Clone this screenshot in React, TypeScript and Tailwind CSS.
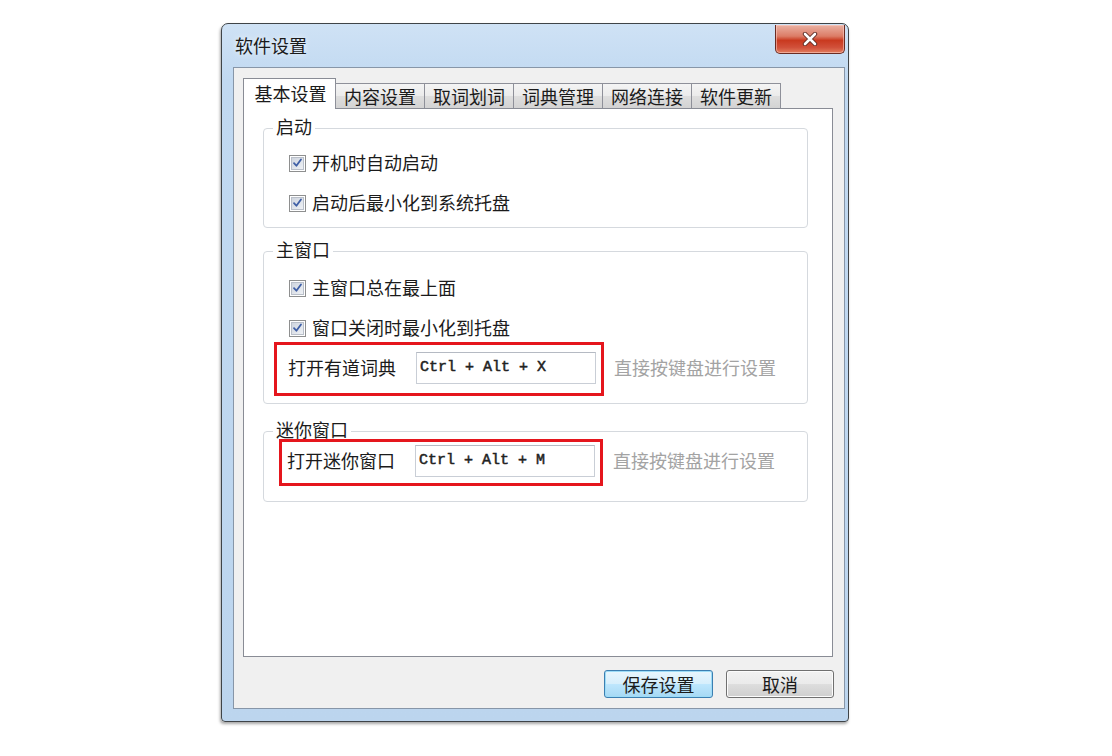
import React from "react";

const cjk = "font-['Noto_Sans_CJK_SC','Microsoft_YaHei',sans-serif]";

function Check() {
  return (
    <span className="flex h-[17px] w-[17px] shrink-0 items-center justify-center border border-[#8e8f8f] bg-white">
      <span className="flex h-[13px] w-[13px] items-center justify-center border border-[#b9bfc9] bg-[linear-gradient(135deg,#cfd5df_0%,#eef1f5_100%)]">
        <svg viewBox="0 0 12 12" className="h-[12px] w-[12px]">
          <path d="M2.2 6.2 L4.8 9 L9.8 2.2" stroke="#3f5fa6" strokeWidth="2" fill="none" strokeLinecap="round" strokeLinejoin="round" />
        </svg>
      </span>
    </span>
  );
}

function CheckRow({ label }: { label: string }) {
  return (
    <div className="flex h-[24px] items-center pl-[25px]">
      <Check />
      <span className="relative -top-px ml-[6px] text-[18px] leading-[24px] text-[#1b1b1b]">{label}</span>
    </div>
  );
}

function Legend({ label }: { label: string }) {
  return (
    <legend className="ml-[9px] px-[3px] text-[18px] leading-[20px]">
      <span className="relative -top-[2px]">{label}</span>
    </legend>
  );
}

function KeyInput({ value }: { value: string }) {
  return (
    <div className="flex h-[32px] w-[180px] items-center border border-[#c9ced6] border-t-[#b5bac3] bg-white pl-[3px] font-['Liberation_Mono','Courier_New',monospace] text-[15px] text-[#222] whitespace-pre [-webkit-text-stroke:0.5px_#222]">
      {value}
    </div>
  );
}

function Tab({ label, active }: { label: string; active?: boolean }) {
  if (active) {
    return (
      <div className="-mb-px flex h-[31px] w-[93px] items-center justify-center border border-b-0 border-[#898c95] bg-white text-[18px] leading-[24px] text-[#1b1b1b]">
        <span className="-mt-[3px] ml-[2px]">{label}</span>
      </div>
    );
  }
  return (
    <div className="-ml-px flex h-[25px] items-center border border-b-0 border-[#8e9099] bg-[linear-gradient(180deg,#f4f4f4_0%,#ebebeb_50%,#dedede_51%,#d3d3d3_100%)] px-[8px] text-[18px] leading-[24px] text-[#1b1b1b]">
      <span className="-mt-px">{label}</span>
    </div>
  );
}

export default function App() {
  return (
    <div className={`h-[756px] w-[1112px] overflow-hidden bg-white pl-[221px] pt-[23px] ${cjk}`}>
      {/* window */}
      <div className="flex h-[699px] w-[628px] flex-col rounded-t-[7px] rounded-b-[4px] border border-[#3f4448] bg-[linear-gradient(180deg,#cfe2f5_0%,#c1d9f1_8%,#bcd5ee_100%)] shadow-[-1px_2px_3px_rgba(0,0,0,0.35)]">
        {/* title bar */}
        <div className="flex h-[43px] items-start justify-between">
          <span className="ml-[13px] mt-[10px] text-[18px] leading-[22px] text-[#1a1a1a] [text-shadow:0_0_6px_rgba(255,255,255,0.9)]">
            软件设置
          </span>
          <div className="mr-[3px] mt-px flex h-[29px] w-[70px] items-center justify-center rounded-b-[5px] border border-t-0 border-[#6b2b22] bg-[linear-gradient(180deg,#eab1a3_0%,#dc7c66_40%,#c9391f_55%,#d1503a_80%,#e27d5d_100%)] shadow-[inset_0_0_0_1px_rgba(255,210,200,0.55)]">
            <svg viewBox="0 0 16 14" className="h-[14px] w-[16px]">
              <path d="M3 2 L13 12 M13 2 L3 12" stroke="#5b2a22" strokeWidth="4.4" strokeLinecap="round" />
              <path d="M3 2 L13 12 M13 2 L3 12" stroke="#ffffff" strokeWidth="2.6" strokeLinecap="round" />
            </svg>
          </div>
        </div>

        {/* frame body */}
        <div className="pb-[12px] pl-[11px] pr-[3px]">
          <div className="flex h-[642px] flex-col border border-[#8796a8] bg-[#f0f0f0] pb-[10px] pl-[9px] pr-[11px] pt-[10px]">
            {/* tabs */}
            <div className="relative z-10 flex h-[30px] items-end">
              <Tab label="基本设置" active />
              <Tab label="内容设置" />
              <Tab label="取词划词" />
              <Tab label="词典管理" />
              <Tab label="网络连接" />
              <Tab label="软件更新" />
            </div>

            {/* panel */}
            <div className="h-[549px] border border-[#898c95] bg-white pl-[19px] pr-[24px] pt-[9px] text-[#1b1b1b]">
              {/* 启动 */}
              <fieldset className="rounded-[4px] border border-[#d5d9de] pb-[12px]">
                <Legend label="启动" />
                <div className="flex flex-col gap-[16px] pt-[13px]">
                  <CheckRow label="开机时自动启动" />
                  <CheckRow label="启动后最小化到系统托盘" />
                </div>
              </fieldset>

              {/* 主窗口 */}
              <fieldset className="mt-[13px] rounded-[4px] border border-[#d5d9de] pb-[7px]">
                <Legend label="主窗口" />
                <div className="flex flex-col gap-[16px] pt-[15px]">
                  <CheckRow label="主窗口总在最上面" />
                  <CheckRow label="窗口关闭时最小化到托盘" />
                </div>
                <div className="mt-[2px] flex items-center">
                  <div className="ml-[10px] flex h-[54px] w-[330px] items-center border-[3px] border-[#e5161d] pl-[11px]">
                    <span className="relative -top-[2px] w-[108px] text-[18px] leading-[24px]">打开有道词典</span>
                    <div className="ml-[20px] -mt-[2px]">
                      <KeyInput value="Ctrl + Alt + X" />
                    </div>
                  </div>
                  <span className="relative -top-[2px] ml-[10px] text-[18px] leading-[24px] text-[#a3a3a3]">直接按键盘进行设置</span>
                </div>
              </fieldset>

              {/* 迷你窗口 */}
              <fieldset className="mt-[17px] rounded-[4px] border border-[#d5d9de] pb-[15px]">
                <Legend label="迷你窗口" />
                <div className="-mt-[2px] flex items-center">
                  <div className="ml-[15px] flex h-[47px] w-[324px] items-center border-[3px] border-[#e5161d] pl-[5px]">
                    <span className="relative -top-[3px] w-[108px] text-[18px] leading-[24px]">打开迷你窗口</span>
                    <div className="ml-[20px] -mt-[3px]">
                      <KeyInput value="Ctrl + Alt + M" />
                    </div>
                  </div>
                  <span className="relative -top-[3px] ml-[10px] text-[18px] leading-[24px] text-[#a3a3a3]">直接按键盘进行设置</span>
                </div>
              </fieldset>
            </div>

            {/* buttons */}
            <div className="-mr-px mt-[13px] flex justify-end gap-[13px]">
              <button className="flex h-[28px] w-[109px] items-center justify-center rounded-[3px] border border-[#3c7fb1] bg-[linear-gradient(180deg,#e8f6fd_0%,#d7effc_48%,#bde6fd_52%,#a6d9f4_100%)] text-[18px] leading-[24px] text-[#1b1b1b] shadow-[inset_0_0_0_1px_#9ddcf7]">
                <span className="-mt-px">保存设置</span>
              </button>
              <button className="flex h-[28px] w-[108px] items-center justify-center rounded-[3px] border border-[#707070] bg-[linear-gradient(180deg,#f2f2f2_0%,#ebebeb_48%,#dddddd_52%,#cfcfcf_100%)] text-[18px] leading-[24px] text-[#1b1b1b] shadow-[inset_0_0_0_1px_#fcfcfc]">
                <span className="-mt-px">取消</span>
              </button>
            </div>
          </div>
        </div>
      </div>
    </div>
  );
}
